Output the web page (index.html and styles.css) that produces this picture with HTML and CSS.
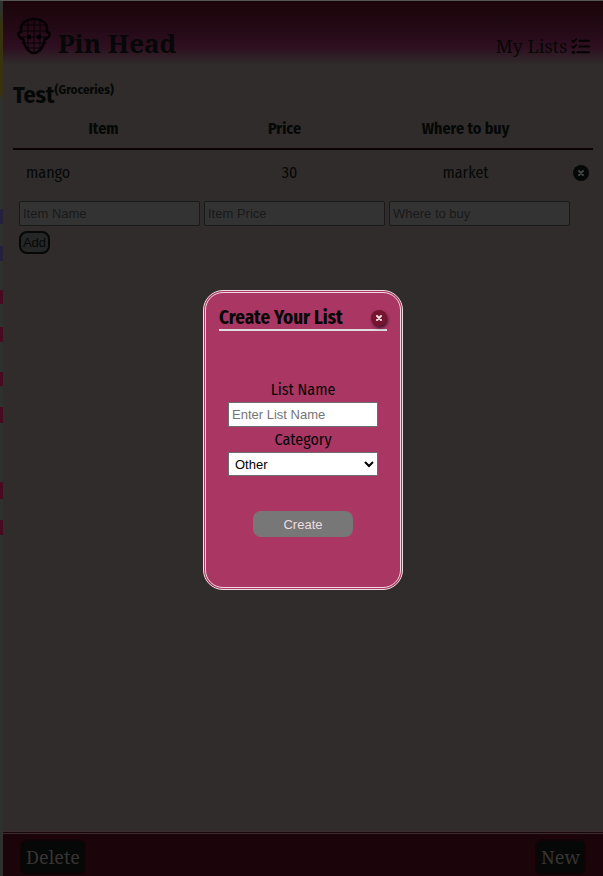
FILE: index.html
```html
<!DOCTYPE html>
<html lang="en">
<head>
<meta charset="utf-8">
<meta name="viewport" content="width=device-width, initial-scale=1">
<title>Pin Head</title>
<link rel="stylesheet" href="styles.css">
</head>
<body>
<div class="page">
  <header class="header">
    <a class="brand" href="#">
      <svg class="logo" viewBox="0 0 34 38" aria-hidden="true">
        <path class="mesh" d="M11 4v28M17 2v34M23 4v28M7 8h20M4 14h26M4 20h26M5 26h24M9 31h16"/>
        <path class="face" d="M17 2C9 2 4 6 4 12v3c-3 0-3 2-2 4s1 3 4 3c1 5 2 8 5 11 4 4 8 4 12 0 3-3 4-6 5-11 3 0 3-1 4-3s1-4-2-4v-3C30 6 25 2 17 2z"/>
        <circle cx="12" cy="20" r="2.2"/><circle cx="22" cy="20" r="2.2"/>
      </svg>
      <span>Pin Head</span>
    </a>
    <a class="lists" href="#">My Lists
      <svg class="tasks" viewBox="0 0 18 16" aria-hidden="true">
        <path d="M8 2.500h9M8 8h9M6 13.500h11"/><path class="ticks" d="M1 2.500l1.500 1.300L5 1M1 8l1.500 1.300L5 6.500"/><circle cx="2.300" cy="13.500" r="1.500"/>
      </svg>
    </a>
  </header>
  <main class="main">
    <h1 class="title">Test<sup>(Groceries)</sup></h1>
    <table class="items">
      <thead><tr><th>Item</th><th>Price</th><th>Where to buy</th><th class="action"></th></tr></thead>
      <tbody><tr><td class="name">mango</td><td class="price">30</td><td>market</td>
        <td class="action"><button class="remove" aria-label="Remove mango"><svg viewBox="0 0 16 16"><path d="M6 6l4 4m0-4l-4 4"/></svg></button></td></tr></tbody>
    </table>
    <form class="add-form">
      <input class="field" aria-label="Item Name" placeholder="Item Name">
      <input class="field" aria-label="Item Price" placeholder="Item Price">
      <input class="field" aria-label="Where to buy" placeholder="Where to buy">
      <button class="add" type="button">Add</button>
    </form>
  </main>
  <footer class="footer">
    <button class="footer-button">Delete</button>
    <button class="footer-button">New</button>
  </footer>
</div>
<div class="overlay">
  <section class="dialog" role="dialog" aria-labelledby="dialog-title">
    <div class="dialog-head">
      <h2 id="dialog-title">Create Your List</h2>
      <button class="close" aria-label="Close"><svg viewBox="0 0 16 16"><path d="M6 6l4 4m0-4l-4 4"/></svg></button>
    </div>
    <form class="create-form">
      <label for="list-name">List Name</label>
      <input id="list-name" placeholder="Enter List Name">
      <label for="category">Category</label>
      <select id="category"><option>Other</option><option>Groceries</option></select>
      <button class="create" type="button">Create</button>
    </form>
  </section>
</div>
</body>
</html>
```
FILE: styles.css
```css
* { box-sizing: border-box; }

body {
  margin: 0;
  padding: 1px 0 0 3px;
  color: #050807;
  font: 16px/20px "Fira Sans Condensed", "Liberation Sans Narrow", Roboto, sans-serif;
  background:
    linear-gradient(#555 1px, transparent 1px),
    linear-gradient(#2f312f 10px, #38320e 25px, #38320e 94px, #2f312f 98px,
      #2f312f 209px, #24203d 209px, #24203d 224px, #2f312f 224px,
      #2f312f 246px, #24203d 246px, #24203d 261px, #2f312f 261px,
      #2f312f 290px, #460b21 290px, #460b21 304px, #2f312f 304px,
      #2f312f 327px, #460b21 327px, #460b21 342px, #2f312f 342px,
      #2f312f 372px, #460b21 372px, #460b21 386px, #2f312f 386px,
      #2f312f 407px, #460b21 407px, #460b21 423px, #2f312f 423px,
      #2f312f 482px, #460b21 482px, #460b21 499px, #2f312f 499px,
      #2f312f 520px, #460b21 520px, #460b21 535px, #2f312f 535px);
}

button, input, select { margin: 0; font: 13px "Liberation Sans", sans-serif; }
button { padding: 0; border: 0; }
svg { display: block; stroke-linecap: round; stroke-linejoin: round; }
a { color: inherit; text-decoration: none; }

.page {
  display: flex;
  flex-direction: column;
  min-height: calc(100vh - 1px);
  background: #302c2b;
}

.header {
  display: flex;
  justify-content: space-between;
  align-items: flex-end;
  height: 64px;
  padding: 0 13px 9px 14px;
  font-family: "Noto Serif", serif;
  background: linear-gradient(#1c050a, #220914 25px, #2e0f20 46px, #302c2b);
}
.brand { display: flex; align-items: flex-end; gap: 7px; font-size: 26px; line-height: 26px; font-weight: bold; }
.logo { width: 34px; height: 38px; margin-bottom: 1px; }
.face { fill: none; stroke: #050204; stroke-width: 2.5; }
.mesh { fill: none; stroke: #090307; stroke-width: 1; }
.lists { display: flex; align-items: center; gap: 4px; font-size: 18px; line-height: 20px; }
.tasks { width: 19px; height: 17px; }
.tasks path { fill: none; stroke: #050204; stroke-width: 2; }
.tasks .ticks { stroke-width: 1.5; }

.main { flex: 1; padding: 16px 10px; }
.title { margin: 0 0 9px; font-size: 24px; line-height: 28px; }
.title sup { font-size: 13px; line-height: 14px; vertical-align: 9px; }

.items { width: 100%; border-collapse: collapse; table-layout: fixed; text-align: center; }
.items th { height: 31px; padding: 0 0 8px; border-bottom: 2px solid #0b0204; }
.items td { height: 46px; padding: 0; }
.items .name { padding-left: 13px; text-align: left; }
.items .price { padding-left: 10px; }
.items .action { width: 37px; }
.remove, .close { display: block; width: 16px; height: 16px; border-radius: 50%; }
.remove { margin-left: 17px; background: #050807; }
.remove path, .close path { fill: none; stroke: #444; stroke-width: 2; }

.add-form { display: flex; flex-wrap: wrap; gap: 5px 4px; padding: 6px; }
.field { width: 181px; height: 25px; padding: 1px 3px; border: 1px solid #181a1a; border-radius: 2px; background: #333; }
.field::placeholder { color: #191919; opacity: 1; }
.add { width: 31px; height: 23px; border: 2px solid #050807; border-radius: 8px; background: #252626; color: #050807; }

.footer {
  display: flex;
  justify-content: space-between;
  height: 45px;
  padding: 5px 17px 0;
  border-top: 3px double #382c2e;
  background: #1c050a;
}
.footer-button {
  height: 36px;
  padding: 0 4px;
  border: 2px solid #100407;
  border-radius: 7px;
  background: #050807;
  color: #393434;
  font: 18px/20px "Noto Serif", serif;
}

.overlay { position: fixed; inset: 4px 0 0 3px; display: flex; align-items: center; justify-content: center; }
.dialog { width: 200px; min-height: 300px; padding: 13px; border: 3px double #f0dce0; border-radius: 20px; background: #a93663; }
.dialog-head { display: flex; justify-content: space-between; align-items: center; height: 25px; border-bottom: 2px solid #dfdcdf; }
.dialog h2 { margin: 0; font-size: 19px; line-height: 22px; white-space: nowrap; }
.close { background: #76152f; box-shadow: 1px 2px 3px #42172e; }
.close path { stroke: #f4dfe2; }
.create-form { display: flex; flex-direction: column; align-items: center; padding-top: 47px; }
.create-form label { line-height: 24px; }
.create-form input, .create-form select { width: 150px; height: 25px; border: 1px solid #6d6d6d; border-radius: 0; background: #fff; color: #000; }
.create-form input { padding: 1px 3px; margin-bottom: 1px; }
.create-form input::placeholder { color: #757575; }
.create-form select { height: 24px; padding: 0 2px; }
.create { width: 100px; height: 26px; margin-top: 35px; border-radius: 8px; background: #777; color: #efdce0; }
```
